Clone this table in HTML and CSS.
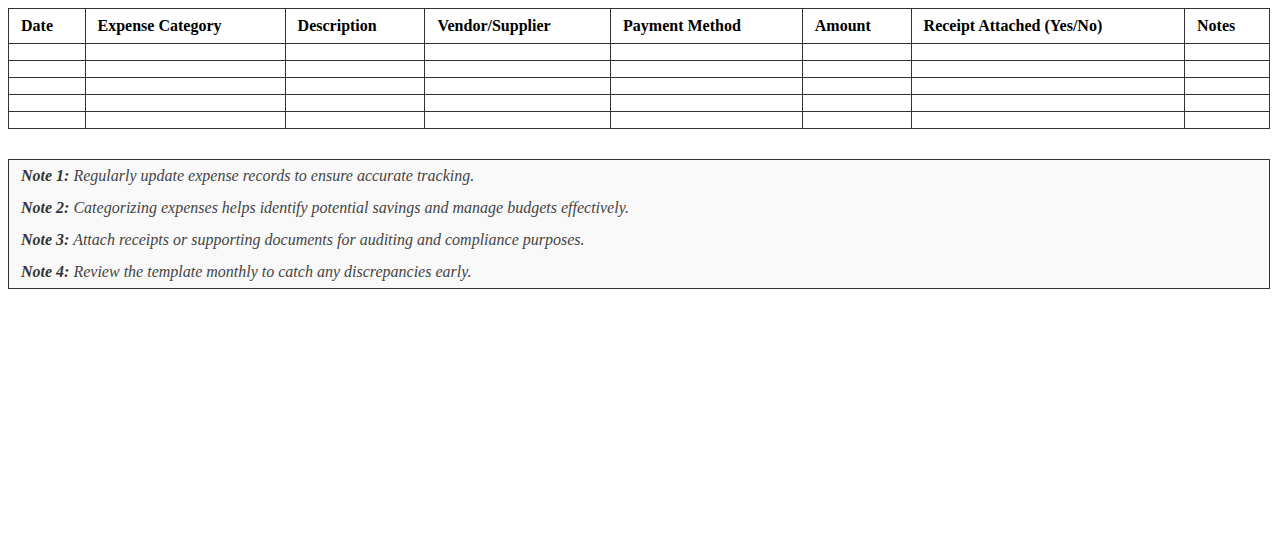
FILE: index.html
```html
<!DOCTYPE html>
<html>
<head>
<meta charset="utf-8">
<link rel="stylesheet" href="styles.css">
</head>
<body>
<table class="expense-table">
  <thead>
    <tr>
      <th>Date</th>
      <th>Expense Category</th>
      <th>Description</th>
      <th>Vendor/Supplier</th>
      <th>Payment Method</th>
      <th>Amount</th>
      <th>Receipt Attached (Yes/No)</th>
      <th>Notes</th>
    </tr>
  </thead>
  <tbody>
    <tr><td></td><td></td><td></td><td></td><td></td><td></td><td></td><td></td></tr>
    <tr><td></td><td></td><td></td><td></td><td></td><td></td><td></td><td></td></tr>
    <tr><td></td><td></td><td></td><td></td><td></td><td></td><td></td><td></td></tr>
    <tr><td></td><td></td><td></td><td></td><td></td><td></td><td></td><td></td></tr>
    <tr><td></td><td></td><td></td><td></td><td></td><td></td><td></td><td></td></tr>
  </tbody>
</table>
<div class="notes">
  <p><strong>Note 1:</strong> Regularly update expense records to ensure accurate tracking.</p>
  <p><strong>Note 2:</strong> Categorizing expenses helps identify potential savings and manage budgets effectively.</p>
  <p><strong>Note 3:</strong> Attach receipts or supporting documents for auditing and compliance purposes.</p>
  <p><strong>Note 4:</strong> Review the template monthly to catch any discrepancies early.</p>
</div>
</body>
</html>
```
FILE: styles.css
```css
body {
  margin: 8px;
  font-family: "Liberation Serif", "Times New Roman", serif;
  font-size: 16px;
  background: #fff;
  color: #000;
}
.expense-table {
  width: 100%;
  border-collapse: collapse;
}
.expense-table th,
.expense-table td {
  border: 1px solid #333;
  padding: 8px 12px;
  text-align: left;
  line-height: 18px;
}
.expense-table td {
  padding: 8px 12px;
  line-height: 0;
  height: 0;
}
.expense-table th {
  font-weight: bold;
}
.notes {
  margin-top: 30px;
  border: 1px solid #333;
  background: #f9f9f9;
  padding: 0 12px;
  color: #444;
  font-style: italic;
}
.notes p {
  margin: 0;
  padding: 7px 0;
  line-height: 18px;
}
.notes strong {
  color: #333;
}
```
